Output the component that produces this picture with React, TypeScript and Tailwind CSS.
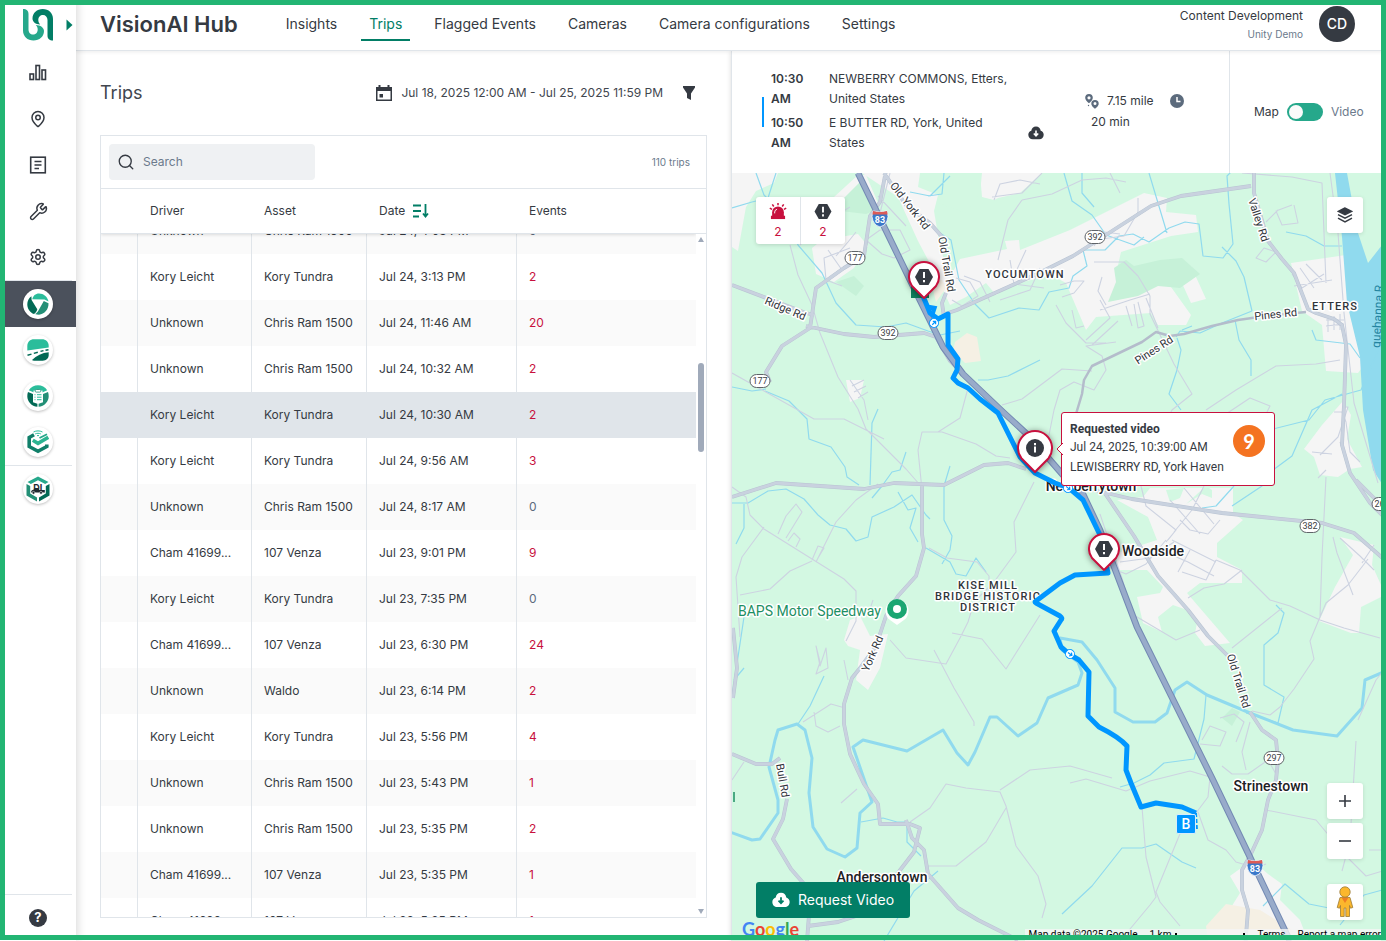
import React, { useLayoutEffect, useRef, useState } from 'react';
import { MapPin, Search, Settings, Wrench } from 'lucide-react';

interface Trip {
  driver: string;
  asset: string;
  date: string;
  events: number;
}

const TRIPS: Trip[] = [
  { driver: 'Unknown', asset: 'Chris Ram 1500', date: 'Jul 24, 4:03 PM', events: 0 },
  { driver: 'Kory Leicht', asset: 'Kory Tundra', date: 'Jul 24, 3:13 PM', events: 2 },
  { driver: 'Unknown', asset: 'Chris Ram 1500', date: 'Jul 24, 11:46 AM', events: 20 },
  { driver: 'Unknown', asset: 'Chris Ram 1500', date: 'Jul 24, 10:32 AM', events: 2 },
  { driver: 'Kory Leicht', asset: 'Kory Tundra', date: 'Jul 24, 10:30 AM', events: 2 },
  { driver: 'Kory Leicht', asset: 'Kory Tundra', date: 'Jul 24, 9:56 AM', events: 3 },
  { driver: 'Unknown', asset: 'Chris Ram 1500', date: 'Jul 24, 8:17 AM', events: 0 },
  { driver: 'Cham 41699...', asset: '107 Venza', date: 'Jul 23, 9:01 PM', events: 9 },
  { driver: 'Kory Leicht', asset: 'Kory Tundra', date: 'Jul 23, 7:35 PM', events: 0 },
  { driver: 'Cham 41699...', asset: '107 Venza', date: 'Jul 23, 6:30 PM', events: 24 },
  { driver: 'Unknown', asset: 'Waldo', date: 'Jul 23, 6:14 PM', events: 2 },
  { driver: 'Kory Leicht', asset: 'Kory Tundra', date: 'Jul 23, 5:56 PM', events: 4 },
  { driver: 'Unknown', asset: 'Chris Ram 1500', date: 'Jul 23, 5:43 PM', events: 1 },
  { driver: 'Unknown', asset: 'Chris Ram 1500', date: 'Jul 23, 5:35 PM', events: 2 },
  { driver: 'Cham 41699...', asset: '107 Venza', date: 'Jul 23, 5:35 PM', events: 1 },
  { driver: 'Cham 41699...', asset: '107 Venza', date: 'Jul 23, 5:25 PM', events: 1 },
];

const NAV = ['Insights', 'Trips', 'Flagged Events', 'Cameras', 'Camera configurations', 'Settings'];

/* ---------- icons ---------- */

function Logo() {
  return (
    <svg width="30" height="32" viewBox="0 0 30 32" fill="none">
      <path d="M0 0c3.500 0 5.500 1.500 5.500 5v15.500c0 3 2 5 4.500 5 2.700 0 4.700-2 4.700-5 0-1.700-.7-3.200-1.900-4.500C17.500 16.300 21 18.500 21 22c0 5.500-4.500 9.500-10.500 9.500C4.500 31.500 0 27.500 0 21.500z" fill="#26a88b" />
      <path d="M30 31.500c-3.500 0-5.500-1.500-5.500-5V11c0-3-2-5-4.500-5-2.700 0-4.700 2-4.700 5 0 1.700.7 3.200 1.900 4.500C12.500 15.200 9.500 13 9.500 9.500 9.500 4 14 0 19.700 0 25.700 0 30 4 30 10z" fill="#027e66" />
    </svg>
  );
}

function ChartIcon() {
  return (
    <svg width="18" height="18" viewBox="0 0 18 18" fill="none" stroke="#353a42" strokeWidth="1.600">
      <rect x="1" y="10" width="3.500" height="5.500" />
      <rect x="7" y="1.500" width="3.500" height="14" />
      <rect x="13" y="6" width="3.500" height="9.500" />
    </svg>
  );
}

function ReportIcon() {
  return (
    <svg width="18" height="18" viewBox="0 0 18 18" fill="none" stroke="#353a42" strokeWidth="1.600">
      <rect x="1.700" y="1.200" width="14.600" height="15.600" />
      <path d="M5.500 5.500h7M5.500 9h7M5.500 12.500h4.500" strokeWidth="1.400" />
    </svg>
  );
}

function Badge({ children }: { children: React.ReactNode }) {
  return (
    <span className="flex size-[30px] items-center justify-center rounded-full bg-white shadow-[0_1px_3px_rgba(0,0,0,0.25)]">
      {children}
    </span>
  );
}

function VisionIcon() {
  return (
    <svg width="22" height="22" viewBox="0 0 22 22">
      <path d="M5.300 6.200C6 2.700 8.500.4 12 .4c4.500 0 8.500 3 9.500 8.100L17.500 6.500z" fill="#2bbd9b" />
      <path d="M4.400 3.200C1.800 5 .3 8 .3 11.200c0 4.500 2.700 8.300 6.700 9.900 1.800-1.300 3-3 3.300-4.800L4.600 7z" fill="#026a55" />
      <path d="M16.800 8l4.700 2.200c.3 6-4 11-9.500 11.500-1.500 0-2.800-.2-4-.7 1.500-.8 2.600-2 3.300-3.300z" fill="#238f76" />
      <path d="M6 7h10.200L11 16z" fill="#fff" />
    </svg>
  );
}

function RoadIcon() {
  return (
    <svg width="22" height="22" viewBox="0 0 22 22">
      <path d="M.3 11.500V7C.3 3 3.200.3 7 .3h8c3.800 0 6.700 2.700 6.700 6.700v1.500L.3 11.500z" fill="#2bbd9b" />
      <path d="M.5 16.200l4-1.100M6.800 14.400l4-1.200M13.500 12.400l3-.8M18.500 11.300l3-.6" stroke="#026a55" strokeWidth="1.500" />
      <path d="M5 21c4.500-4.500 10-7 16.700-7.700V16c0 3.300-2.500 5.700-6 5.700H7c-.8 0-1.500-.3-2-.7z" fill="#026a55" />
    </svg>
  );
}

function ClipboardIcon() {
  return (
    <svg width="22" height="22" viewBox="0 0 22 22">
      <path d="M1.800 5.300C4 2 7.300.3 11 .3s7 1.700 9.200 5l-5 2.200H7z" fill="#2bbd9b" />
      <path d="M1 7l5 2v8.300l4.400 1.500v3C4.500 21.300.3 16.500.3 11.200.3 9.700.5 8.300 1 7z" fill="#026a55" />
      <path d="M21 7l-5 2v8.300l-4.400 1.500v3c5.900-.5 10.100-5.300 10.100-10.600 0-1.500-.2-2.900-.7-4.200z" fill="#238f76" />
      <rect x="6.500" y="5.500" width="9" height="11" fill="#fff" />
      <rect x="8.200" y="4.500" width="5.600" height="2.600" rx="1" fill="#fff" stroke="#238f76" strokeWidth=".8" />
      <path d="M7.500 9.700h1M10 9.700h4.500M7.500 12.200h1M10 12.200h4.500M7.500 14.700h1M10 14.700h4.500" stroke="#2bbd9b" />
    </svg>
  );
}

function CheckHexIcon() {
  return (
    <svg width="22" height="24" viewBox="0 0 22 24" fill="none">
      <path d="M6.500 2C9.300.5 12.700.5 15.500 2M8.200 3.900c1.800-.8 3.800-.8 5.600 0M10 5.700c.7-.3 1.300-.3 2 0" stroke="#2bbd9b" />
      <path d="M7 4.800L2.200 7.500v9L11 21.300l8.800-4.800v-2" stroke="#107f69" strokeWidth="3.600" />
      <path d="M5.800 10.200L11 13.300l10.300-6" stroke="#2bb491" strokeWidth="3.600" />
      <path d="M12.500 8l7.500-3.800" stroke="#26a88b" strokeWidth="1.800" />
    </svg>
  );
}

function DlIcon() {
  return (
    <svg width="24" height="26" viewBox="0 0 24 26">
      <path d="M12 .5L22.500 6l-3.300 2L12 4.300 4.800 8 1.500 6z" fill="#26a88b" />
      <path d="M.5 8l3.700 2v7.500l6.800 4v4L.5 19.500z" fill="#238f76" />
      <path d="M23.500 8l-3.700 2v7.500l-6.800 4v4l10.500-6z" fill="#026a55" />
      <text x="13" y="15" textAnchor="middle" className="fill-[#1f2a30] font-[Inter] text-[9px] font-bold">DL</text>
      <path d="M5 16.500c0-1.800 1-2.600 2.500-2.800L9 12h3l1.500 2h5l.5 2.500z" fill="#1f2a30" />
      <path d="M7.500 18.200a1.400 1.400 0 1 0 0-2.800 1.400 1.400 0 0 0 0 2.800zM15 18.200a1.400 1.400 0 1 0 0-2.800 1.400 1.400 0 0 0 0 2.800z" fill="#1f2a30" stroke="#fff" strokeWidth=".5" />
    </svg>
  );
}

function CalendarIcon() {
  return (
    <svg width="16" height="16" viewBox="0 0 16 16" fill="#353a42">
      <path d="M0 2h2.500V0h2v2h7V0h2v2H16v14H0zm1.500 4v8.500h13V6z" fillRule="evenodd" />
      <rect x="3.500" y="9" width="3.500" height="3.500" />
    </svg>
  );
}

function CloudIcon({ fill, arrow, size }: { fill: string; arrow: string; size: number }) {
  return (
    <svg width={size} height={size} viewBox="0 0 16 16">
      <path d="M8 1.500c2.700 0 4.300 1.800 4.700 4.200 1.900.6 3 2.100 3 4 0 2.700-1.900 4.600-4.400 4.600H4.700C2.200 14.300.3 12.400.3 9.700c0-1.900 1.100-3.400 3-4C3.700 3.300 5.300 1.500 8 1.500z" fill={fill} />
      <path d="M8 5.500v5M5.800 8.500L8 10.800l2.200-2.300" stroke={arrow} strokeWidth="1.600" fill="none" />
    </svg>
  );
}

function DistanceIcon() {
  return (
    <svg width="14" height="15" viewBox="0 0 14 15" fill="#5c6b7d" fillRule="evenodd">
      <path d="M4 0a3.800 3.800 0 0 1 3.800 3.800C7.800 6.500 4 9.300 4 9.300S.2 6.500.2 3.800A3.800 3.800 0 0 1 4 0zm0 2.200a1.600 1.600 0 1 0 0 3.200 1.600 1.600 0 0 0 0-3.200z" />
      <path d="M10 6a3.700 3.700 0 0 1 3.700 3.700c0 2.500-3.700 5-3.700 5s-3.700-2.500-3.700-5A3.700 3.700 0 0 1 10 6zm0 2.100a1.500 1.500 0 1 0 0 3 1.500 1.500 0 0 0 0-3z" />
      <circle cx="3.500" cy="11.500" r=".7" />
    </svg>
  );
}

function SirenIcon() {
  return (
    <svg width="18" height="18" viewBox="0 0 18 18" fill="#c8103e">
      <path d="M2.800 14V9.800a6.200 6.200 0 0 1 12.400 0V14z" />
      <rect x="1.500" y="13.500" width="15" height="3.500" />
      <path d="M9 0v2.500M3 1.500l1.500 2.200M15 1.500l-1.500 2.200M.3 5.500l2.400 1.200M17.700 5.500l-2.400 1.200" stroke="#c8103e" strokeWidth="1.600" />
      <path d="M5.500 11V9.500a3 3 0 0 1 2.500-2.800" stroke="#fff" fill="none" />
    </svg>
  );
}

function HexAlert({ x = 0, y = 0 }: { x?: number; y?: number }) {
  return (
    <g transform={`translate(${x} ${y})`}>
      <path d="M-9 0l4.500-8h9L9 0 4.500 8h-9z" fill="#353a42" />
      <path d="M0-5v6M0 3v2.200" stroke="#fff" strokeWidth="2" />
    </g>
  );
}

function LayersIcon() {
  return (
    <svg width="16" height="17" viewBox="0 0 16 17" fill="none" stroke="#353a42" strokeWidth="1.500">
      <path d="M8 1L1.500 4.300 8 7.600l6.500-3.300z" fill="#353a42" />
      <path d="M1 7.600l7 3.600 7-3.600M1 11.200l7 3.600 7-3.600" />
    </svg>
  );
}

function Pegman() {
  return (
    <svg width="18" height="32" viewBox="0 0 18 32" fill="#fbb72d" stroke="#9a7a35" strokeWidth=".8">
      <path d="M4 11.500h10l2.800 10-2.300.7-1-2.700v11h-3.700V22H8.200v8.500H4.500v-11l-1 2.700-2.300-.7z" />
      <path d="M5.500 11.500h7L9 17z" fill="#ef7d24" stroke="none" />
      <circle cx="9" cy="6" r="5.200" />
    </svg>
  );
}

/* ---------- sidebar ---------- */

function SideItem({ label, active, children }: { label: string; active?: boolean; children: React.ReactNode }) {
  return (
    <a href="#" aria-label={label} className={`flex h-[46px] items-center justify-center ${active ? 'bg-[#4b515c]' : ''}`}>
      {children}
    </a>
  );
}

function Sidebar() {
  return (
    <aside className="z-10 flex w-[76px] shrink-0 flex-col bg-white text-[#353a42] shadow-[2px_0_8px_rgba(0,0,0,0.14)]">
      <div className="flex h-[50px] items-center justify-end gap-3 pr-[3px]">
        <Logo />
        <svg width="8" height="12" viewBox="0 0 8 12"><path d="M1.500.5L7.500 6l-6 5.500z" fill="#027e66" /></svg>
      </div>
      <SideItem label="Analytics"><ChartIcon /></SideItem>
      <SideItem label="Locations"><MapPin size={18} strokeWidth={2} /></SideItem>
      <SideItem label="Reports"><ReportIcon /></SideItem>
      <SideItem label="Maintenance"><Wrench size={19} strokeWidth={1.9} /></SideItem>
      <SideItem label="Settings"><Settings size={18} strokeWidth={2} /></SideItem>
      <div className="mr-1 border-t border-[#e0e5ea]" />
      <SideItem label="Vision" active><Badge><VisionIcon /></Badge></SideItem>
      <SideItem label="Roads"><Badge><RoadIcon /></Badge></SideItem>
      <SideItem label="Forms"><Badge><ClipboardIcon /></Badge></SideItem>
      <SideItem label="Compliance"><Badge><CheckHexIcon /></Badge></SideItem>
      <div className="mr-1 border-t border-[#e0e5ea]" />
      <SideItem label="DL"><Badge><DlIcon /></Badge></SideItem>
      <div className="mt-auto mr-1 border-t border-[#e0e5ea]" />
      <SideItem label="Help">
        <span className="flex size-[18px] items-center justify-center rounded-full bg-[#353a42] text-[13px] font-bold text-white">?</span>
      </SideItem>
    </aside>
  );
}

/* ---------- header ---------- */

function Header() {
  return (
    <header className="z-[5] flex h-[51px] shrink-0 items-start border-b border-[#e0e5ea] bg-white pr-[31px] pl-6 shadow-[0_1px_4px_rgba(0,0,0,0.08)]">
      <h1 className="mt-2 text-[22px] leading-8 font-semibold">VisionAI Hub</h1>
      <nav className="ml-8 flex">
        {NAV.map((item) => (
          <a
            key={item}
            href="#"
            className={`mx-2 mt-2 flex h-[33px] items-center border-b-2 px-2 text-sm ${
              item === 'Trips' ? 'border-[#027e66] text-[#027e66]' : 'border-transparent'
            }`}
          >
            {item}
          </a>
        ))}
      </nav>
      <div className="mt-1.5 ml-auto flex items-center gap-4">
        <div className="text-right">
          <div className="text-xs leading-5">Content Development</div>
          <div className="text-[10px] leading-4 text-[#6b7a8c]">Unity Demo</div>
        </div>
        <span className="flex size-9 items-center justify-center rounded-full bg-[#353a42] text-sm font-medium text-white">CD</span>
      </div>
    </header>
  );
}

/* ---------- trip list ---------- */

function TripTable() {
  const scroller = useRef<HTMLDivElement>(null);
  const [selected, setSelected] = useState(4);

  useLayoutEffect(() => {
    if (scroller.current) scroller.current.scrollTop = 26;
  }, []);

  const th = 'h-[45px] border-b border-[#e0e5ea] bg-white pl-3 text-left font-normal';
  const td = 'h-[46px] pl-3';

  return (
    <div className="flex min-h-0 flex-1">
      <div ref={scroller} className="min-w-0 flex-1 overflow-y-auto [scrollbar-width:none]">
        <table className="w-full table-fixed border-separate border-spacing-0 text-xs leading-5">
          <thead className="sticky top-0 shadow-[0_1px_3px_rgba(0,0,0,0.12)]">
            <tr>
              <th className={`${th} w-[37px]`} aria-label="Select" />
              <th className={`${th} w-[114px]`}>Driver</th>
              <th className={`${th} w-[115px]`}>Asset</th>
              <th className={`${th} w-[150px]`}>
                <button className="flex items-center gap-2">
                  Date
                  <svg width="16" height="14" viewBox="0 0 16 14" fill="none" stroke="#027e66" strokeWidth="1.800">
                    <path d="M0 1.500h8M0 7h8M0 12.500h6M12.500 0v12M10 9.500l2.500 3 2.500-3" />
                  </svg>
                </button>
              </th>
              <th className={th}>Events</th>
            </tr>
          </thead>
          <tbody>
            {TRIPS.map((trip, i) => {
              const on = i === selected;
              const cell = `${td} ${on ? '' : 'border-r border-[#e0e5ea]'}`;
              return (
                <tr key={i} onClick={() => setSelected(i)} className={on ? 'bg-[#e0e5ea]' : i % 2 === 0 ? 'bg-[#fafafa]' : 'bg-white'}>
                  <td className={cell} />
                  <td className={`${cell} truncate`}>{trip.driver}</td>
                  <td className={cell}>{trip.asset}</td>
                  <td className={cell}>{trip.date}</td>
                  <td className={`${td} ${trip.events > 0 ? 'text-[#c8103e]' : 'text-[#5c6b7d]'}`}>{trip.events}</td>
                </tr>
              );
            })}
          </tbody>
        </table>
      </div>
      <div className="flex w-2.5 flex-col items-center" aria-hidden="true">
        <div className="h-[45px] w-full shrink-0 border-b border-[#e0e5ea]" />
        <svg width="6" height="5" viewBox="0 0 6 5" className="mt-[3px]"><path d="M3 0l3 5H0z" fill="#a0aaba" /></svg>
        <div className="grow-[121]" />
        <div className="h-[89px] w-1.5 shrink-0 rounded-full bg-[#a0aaba]" />
        <div className="grow-[456]" />
        <svg width="6" height="5" viewBox="0 0 6 5" className="mb-[3px]"><path d="M3 5L0 0h6z" fill="#a0aaba" /></svg>
      </div>
    </div>
  );
}

function TripsPanel() {
  return (
    <section className="flex min-h-0 min-w-0 flex-col px-6 pb-[23px]">
      <div className="flex h-[84px] shrink-0 items-center">
        <h2 className="text-lg text-[#41464e]">Trips</h2>
        <button className="ml-auto flex items-center gap-[9px] text-xs text-[#41464e]">
          <CalendarIcon />
          Jul 18, 2025 12:00 AM - Jul 25, 2025 11:59 PM
        </button>
        <button className="mr-3 ml-5" aria-label="Filter">
          <svg width="12" height="14" viewBox="0 0 12 14"><path d="M0 0h12v1.500L8 7.500V14l-4-2V7.500L0 1.500z" fill="#353a42" /></svg>
        </button>
      </div>
      <div className="flex min-h-0 flex-1 flex-col border border-[#e0e5ea]">
        <div className="flex h-[53px] shrink-0 items-center border-b border-[#e0e5ea] pr-4 pl-2">
          <label className="flex h-9 w-[206px] items-center gap-2 rounded bg-[#eff1f3] pl-2">
            <Search size={18} strokeWidth={1.8} />
            <input type="text" aria-label="Search trips" placeholder="Search" className="w-40 bg-transparent text-xs outline-none placeholder:text-[#6b7a8c]" />
          </label>
          <span className="ml-auto text-[10px] text-[#6b7a8c]">110 trips</span>
        </div>
        <TripTable />
      </div>
    </section>
  );
}

/* ---------- trip details ---------- */

function TripDetails() {
  return (
    <div className="flex h-[122px] shrink-0 bg-white text-xs leading-5">
      <div className="flex flex-1 pt-[18px] pl-[30px]">
        <div className="mt-7 h-[30px] w-0.5 bg-[#0096ff]" />
        <div className="ml-[7px] flex w-[240px] flex-col gap-1">
          <div className="flex">
            <span className="w-[58px] shrink-0 pr-4 font-semibold">10:30 AM</span>
            <span>NEWBERRY COMMONS, Etters, United States</span>
          </div>
          <div className="flex">
            <span className="w-[58px] shrink-0 pr-4 font-semibold">10:50 AM</span>
            <span className="pr-4">E BUTTER RD, York, United States</span>
          </div>
        </div>
        <button className="mt-14 ml-[17px] self-start" aria-label="Download">
          <CloudIcon fill="#353a42" arrow="#fff" size={16} />
        </button>
        <div className="mt-[22px] ml-[41px]">
          <div className="flex items-center">
            <DistanceIcon />
            <span className="ml-2">7.15 mile</span>
            <svg width="14" height="14" viewBox="0 0 14 14" className="ml-4">
              <circle cx="7" cy="7" r="7" fill="#5c6b7d" />
              <path d="M7 3v4.500h3.500" stroke="#fff" strokeWidth="1.500" fill="none" />
            </svg>
          </div>
          <div className="mt-px ml-[6px]">20 min</div>
        </div>
      </div>
      <div className="flex w-[157px] items-center gap-2 border-l border-[#e0e5ea] pl-6">
        <span>Map</span>
        <button role="switch" aria-checked="false" aria-label="Show video" className="flex h-[18px] w-9 items-center rounded-full bg-[#26a88b] px-0.5">
          <span className="size-3.5 rounded-full bg-[#fafafa]" />
        </button>
        <span className="text-[#6b7a8c]">Video</span>
      </div>
    </div>
  );
}

/* ---------- map ---------- */

const URBAN = [
  'M732 173h46l-4 10-18 8-10 16-8 44-6-4z',
  'M834 197l24-22h8l12 28-14 10z',
  'M862 173h58l-2 14 20 8-4 16 6 36 10 30 10-18 47-10-2-8 14-1 1 10 50-20 74-37 23 5-1 14 30 3 2 17-27 4-50 16-5 22 45-10 30 2 15 33-15 4-15-33-15 3 30 42-5 10-28 0-7-12-55 4-10 13-20-47-15-8-40 10-15 10-10-12-20 14-16 8-14-30-18-34-20-44z',
  'M822 240l36-6 10 12-14 22-20 14-18-8-4-26z',
  'M980 173h62l-22 20-22 5-4 2-12-3z',
  'M1291 263l55-8 4 60 14 50-6 8-32-2-4-46-20-14z',
  'M1343 401l8 14-4 24 15 28-12 2-12 8-18-2-6-18-10-8 18-24z',
  'M1117 500L1143 497 1150 488 1233 488 1233 513 1243 520 1217 543 1217 557 1242 570 1242 583 1200 583 1187 593 1230 643 1205 646 1195 633 1197 623 1187 610 1173 605 1158 617 1162 632 1143 623 1137 597 1160 593 1163 587 1147 570 1117 570 1117 553 1157 540 1148 517z',
  'M1340 537l34 8-2 20 9 20v12l-20 10-2 26-8 0-32-12 16-34 18-32z',
  'M844 640l6-20 10-4 10 20 18-2-8 34-12 22-12-10 4-30-12-4z',
  'M1230 876l22-16 16 14 14 10-2 16 20 20 8 21h-72l4-24-10-8 10-16z',
  'M846 380l18 0-4 18-10 4z',
];

const PARKS = [
  'M1114 268l12-8 8 6 26-6 22-2 18 16-20 14-22-2-20 10-30 6 8-20z',
  'M832 210l30-30 14 30-10 4z',
  'M1222 718l10-10 8 4-8 14z',
  'M836 282l18-6 10 10-8 10z',
];

// open ground inside the built-up areas
const CLEARINGS = ['M1166 490l18-2-4 10-10 4z', 'M1186 504l16-10 10 4 0-8-6-4z', 'M938 173h44l-2 20-14 20-28-10z'];

const SAND = ['M955 342l12-9 10 4 4 24-16 2-12-12z', 'M930 278l12 2 4 8-10 14z', 'M1206 926l20-22 34 6 40 25 4 6h-96z'];

const SUSQUEHANNA = 'M1335 173l7 64 5 66 13 54 3 53 10 60 13 20V240l-18 23-10-30-11-60z';

const STREAMS = [
  'M732 208l20-6 16-4 8-25M756 173l8 22 20 20 14 30 24 28 14 30 20 22 30 2 20-4 22 8 12 4 20-4',
  'M910 192l20 4 20-20M928 196l14-2 2-21M935 230l16 10 8 40 16 24 14 14 30-10 20 2 10-18 20-4 4-12 14-10-4-16 22 0 14-14 14-2 16 8 20-14 16-6 14 2 4 32 20 2 10-14-4-40-2-28 4-4',
  'M1064 173l8 28 20 14 14 20 28 10 10-8M1149 173l18 60M1082 173v20l12 14M1222 247l14 14 8 16 8 34',
  'M732 387l20 4 14-2M1252 311l-30 12-22 10-20-2-4 6M1286 232l20 4 18 10 18 0M1312 330l4 10 34 4 10 14',
  'M1177 338l4 12-4 20-8 24 12 16M1235 320l4 20 12 20 0 16M1182 330l10-4',
  'M765 391l24 10 18 18 2 20 22 8 14 20 2 10 12 8M878 409l-6 14-2 62M906 452l-6 18-8 2-10 14-10 12',
  'M732 503l16 0 20-12 18-2 18 10 14 16 12 10 16 4 10 12 12-4 4-20 22-10 18-12 14 20 4 4M744 504v24l-8 16',
  'M950 466l-6 20 0 34 8 16-2 14-8 14M926 548l24 14 6 12 10 2 10-18 10 14',
  'M898 492l10 18 8-2-6 20 8 14M1234 486l-18 20-14 2M1276 605l8 8-6 20-14 12v40l20 12-6 26-32-10',
  'M1206 695l-2 24-10 40-30 4-14 12-16 8-14 4M732 697l12-80M744 668l-10 12',
  'M824 676l-14 30-12 18M1062 914l30-28 30-38 20 0 14-4 26 18 14 6M1263 906l22-22 24 20 20 4',
  'M861 822l22-4 14 4 10 0v20l14 14M884 941l30-50 24-20M1340 925l24-30 22-6',
  'M978 380l10 0 20-4 20-10 12-6M1381 344l-20 46-36 10-16 20-40 10M1232 506l30-20 0-8 30-22 20-46 30-16',
];

const RIVER =
  'M730 832l22 8 8-1 18-26v-13l-9-33 6-27 3-10 19-6 8 6 7 28-3 35 4 34 14 22 18 8 12-9 3-35 12-11-19-55 10-7 44 11 36-21 14 23 11 12 7-13 15-35 7 0 21 19 19-13 11-25 30-13 4-12-4-11-16-12-2-12 22 4 15 18 18 28v24l18 10h22l12-9 8-23 12-8 20 13 43 18 43 17 44 6 25-28 3-28 21-9';

const MINOR_ROADS = [
  'M790 245l8 30 14 30 8 28 18 44 20 32 8 20 40 40 14 16M732 373l82 46 30 0 40 20',
  'M732 487l14 10 4 18 14 14 80 50 12 12v30l-10 20M844 660l4 20M816 562l20-40 20-22 22-16',
  'M764 527l-22 30-6 20 4 60M740 595l30-6 20-18 22-10M778 534l8-18 10-12 6 8-16 26M788 541l6-8 6 6-4 8M812 560l6-14 6 2-6 10',
  'M922 490l-4-40 4-18 20 0 34 12 20 12 14 2M968 388l-8 30-22 14M1002 405l20-6 40-30 30 2',
  'M1034 482l-20 40 2 30-22 30-20 20-6 20-8 16-14 26-40-6-16-18M952 633l30 6 24 30 10-16 24-38',
  'M929 548l18 10 30 4 12 14 0 20M934 650l20 38 20 34 0 4M873 600l-4 12-12 0M880 615l-10-2',
  'M910 822l20-14 16-24 20 4 34 4 6 14 10 40 22 30 8 28-4 14M1000 790l30-20 40-4 42 12M1006 808l-20 34-30 24-30 0',
  'M841 803l16-14M803 722l28-18 14 4M814 712l2 14 12 6 12-6M732 780l12-18M1196 813l12-16 2-20-20-6-40 10-24 10-40-12-16 4',
  'M1142 807l4 50 10 40-6 8-30 36M1184 824l-28 68 4 10 20 24M1198 812l10 28 18 10 10 12 20 6 10-4',
  'M1266 810l50 10 30 36 20 20 20-6M1356 741l-6 100-8 30M1381 850h-12M1222 766l10 8 16 0 20-14 8 14',
  'M1202 740l8-14 16 6-6 14-20-2M1220 718l14-4 10 8-8 20M1250 722l-8 30 4 18M1358 720l18-40 8-10',
  'M1060 470l-14-20 8-40 6-20 14-8 20 8 12-20-4-14-16-10 30-4M1100 514l8 24 14 40 10 36 44 26 24-10',
  'M1216 560l24 10 30 30 20 6 30 14 24 8 36 10M1232 648l50-40M1320 617l-10 24 4 18-20 30-14 18-10 8-18-4',
  'M1320 617l6-14 22-18 20-26M1333 537l4 16 16 42M1340 538l20 18 14 14M1374 545l-12 18',
  'M1188 598l16-10 20-4 18-14M1140 482l6 24 30 24-8 10M1204 486l-12 24-18 22M1170 500l30 34M1184 488l30 36M1180 520l10 10 18 4 12-14M1166 542l10-12M1160 550l28 12 26 14M1172 540l44 22M1182 572l24 8 10-20M1190 550l-12 22',
  'M1106 566l20 8 20-10 20-24M1120 562l30-4 24-16M1320 617l2-60 4-80M1206 410l30-20 40-24 40-2 24-4',
  'M1240 486l20-60 10-20-20-8-30 20M1292 205l-16 6 6 14 16-2-4-18M1266 222l12-12M1256 258l8-10 12 4-10 10zM1330 173l8 60 6 80 10 90 24 80M1242 173l50 4 30 6 4 100',
  'M1022 200l-14 20-10 40M1022 200l30-6 30-14 24-2 20 4M1042 173l-20 20-30 4M1110 173l10 20M800 245l20-20 30-18M836 256l12-14 8-10',
  'M1094 240l30-4 14-24 0-14M1094 246l10-14 16 2M1094 262l30 0 14 14 12 20 0 18 24 50 18 30-20 16-20 40M1106 305l-8-14 4-14M1060 285l14-4 10 0-10 12-12 4M1056 305l10 18 20 20 20 0M1100 310l30-10 20-6M1126 306l6 20M1134 304l4 24 6-2-6-24M1146 298l12 30M1086 340l24-22-10-18M1092 345l26-24M1072 310l4 18 8-2',
  'M1292 274l10 14 22-14M1300 268l14 20M1294 286l38-6M1306 264l16 16M1328 318v14M1334 316v14M1340 314v16M1326 320l18 0M1326 326l18-2',
  'M1320 455l18-18 10-30-6 0M1340 442l8 24M1326 470l-8 8M1312 452l20 2M1334 412l8 0 4 10 4 30 10 10',
  'M866 240l14-10 20 0 10 20-16 8-12-4zM850 248l-26 10 2 22 16 6M828 250l14 20M994 200l6-16 20-4 20 4M878 196l28 30M890 173l-10 40M952 300l10 6 16-10-8-14-14-4M964 276l16 6 10 20M1010 260l4 24 30 4M1026 250l-14 30M1000 300l30-10 10-22',
  'M850 380l14 20 4 20M852 386l12-6M854 392l12-6M858 398l10-6M820 662l-4-16 4 20 6-18 2 20-12 6z',
];

const ROADS = [
  'M732 285l74 28 8 2M770 382l-4-10 16-26 28-18 6-40 28-20 20-12 6-40 10-14 8-42',
  'M806 326l38 8 30 3 50-4 12 4 14 24 14 14',
  'M945 314l12-4 80-36 36-18 78-50 30-10 70-10',
  'M884 173l22 32 24 18 14 16M946 293l-4 10 2 14',
  'M1254 173v20l14 48 14 18 12 14 14 36 8 4 18 6 8 6 4 20-2 60-2 40 8 28 20 30 14 14',
  'M732 497l44-14 88 6 30-6 50 2 40-20 24-2 18 6',
  'M922 484v50l2 14-8 28-18 20-12 20-10 30-16 22-8 10-8 26v20l6 30 14 30 14 20 2 20 30 0 10 4-6 24-20 26-6 22',
  'M906 820l6 18 12 12 4 24 30 34 20 12 40 20M787 799l-4 20-10 20 18 30 14 16 4 30-2 26M732 754l24 10 16 0 8-6M808 926l30-4 30-10',
  'M1072 485l60 14 90 14 100 10 32 10 32 28M1356 480l26 26',
  'M1104 492l30 44 24 40 30 34 20 26 20 20 4 14M1250 712l12 18 14 10 2 20-2 20-8 20-6 30-12 26-8 14v20l6 20-4 51',
  'M733 628l4 40-4 30',
];

const PINES_RD = 'M1306 312l-40 4-28 4-26 6-28 8-14 2-14-4-14 10-50 24-8 14-2 14-6 20';

const INTERSTATE = 'M858 173L910 280 943 347 963 374 1003 412 1030 437 1063 475 1082 492 1100 530 1137 627 1213 780 1248 853 1290 941';

const ROUTE =
  'M923 296l7 17 8 6 10-5v31l10 14-1 11-4 8 5 5 10 5 12 11 18 14 22 44 15 16 20 10 14 5 14 12 17 35 8 38-33 2-15 8-24 18q-2 1 0 2l24 13q3 2 1 4l-7 11 7 16 8 7 10 6 10 12-1 44 11 11q20 10 28 19l-1 24 5 13 10 24 15-4 26 4 14 6';

interface Label {
  text: string;
  x: number;
  y: number;
  rotate?: number;
}

const ROAD_LABELS: Label[] = [
  { text: 'Old York Rd', x: 907, y: 208, rotate: 52 },
  { text: 'Old Trail Rd', x: 943, y: 265, rotate: 80 },
  { text: 'Ridge Rd', x: 784, y: 312, rotate: 23 },
  { text: 'Valley Rd', x: 1255, y: 221, rotate: 72 },
  { text: 'Pines Rd', x: 1156, y: 353, rotate: -33 },
  { text: 'Pines Rd', x: 1276, y: 318, rotate: -6 },
  { text: 'York Rd', x: 876, y: 655, rotate: -66 },
  { text: 'Old Trail Rd', x: 1235, y: 682, rotate: 73 },
  { text: 'Bull Rd', x: 779, y: 781, rotate: 80 },
];

const DISTRICTS: Label[] = [
  { text: 'YOCUMTOWN', x: 1025, y: 278 },
  { text: 'ETTERS', x: 1335, y: 310 },
  { text: 'KISE MILL', x: 988, y: 589 },
  { text: 'BRIDGE HISTORIC', x: 988, y: 600 },
  { text: 'DISTRICT', x: 988, y: 611 },
];

const TOWNS: Label[] = [
  { text: 'Newberrytown', x: 1091, y: 491 },
  { text: 'Woodside', x: 1153, y: 556 },
  { text: 'Strinestown', x: 1271, y: 791 },
  { text: 'Andersontown', x: 882, y: 882 },
];

const SHIELDS: Label[] = [
  { text: '177', x: 855, y: 258 },
  { text: '392', x: 888, y: 333 },
  { text: '177', x: 760, y: 381 },
  { text: '392', x: 1095, y: 237 },
  { text: '382', x: 1310, y: 526 },
  { text: '297', x: 1274, y: 758 },
  { text: '262', x: 1382, y: 504 },
];

function Interstate({ x, y }: { x: number; y: number }) {
  return (
    <g transform={`translate(${x} ${y})`}>
      <path d="M-7-8Q0-6 7-8 9-2 7 2 5 7 0 8-5 7-7 2-9-2-7-8z" fill="#3a78c9" stroke="#fff" strokeWidth=".8" />
      <path d="M-7-8Q0-6 7-8l.6 3.500h-15.200z" fill="#dd5b56" />
      <text y="4" textAnchor="middle" className="fill-white text-[9px] font-bold">83</text>
    </g>
  );
}

function Pin({ x, y, r, tip, children }: { x: number; y: number; r: number; tip: number; children: React.ReactNode }) {
  const w = r * 0.8;
  const h = r * 0.6;
  return (
    <g transform={`translate(${x} ${y})`} className="drop-shadow-[0_1px_3px_rgba(0,0,0,0.45)]">
      <path d={`M0 ${tip}L${-w} ${h}A${r} ${r} 0 1 1 ${w} ${h}z`} fill="#fff" stroke="#c8103e" strokeWidth="2" strokeLinejoin="round" />
      {children}
    </g>
  );
}

function RouteArrow({ x, y, rotate }: { x: number; y: number; rotate: number }) {
  return (
    <g transform={`translate(${x} ${y}) rotate(${rotate})`} fill="none" stroke="#0096ff">
      <circle r="4.500" fill="#fff" />
      <path d="M-2.500 0h5M.3-2l2 2-2 2" strokeWidth="1.200" />
    </g>
  );
}

function MapCanvas() {
  const halo = 'stroke-white stroke-[3px] [paint-order:stroke] [stroke-linejoin:round]';
  return (
    <svg
      className="block size-full font-[Roboto,sans-serif]"
      viewBox="732 173 654 768"
      preserveAspectRatio="xMinYMin slice"
      role="img"
      aria-label="Trip route map"
    >
      <rect x="732" y="173" width="654" height="768" fill="#d3f8e2" />
      {URBAN.map((d) => <path key={d} d={d} fill="#f5f5f5" />)}
      {CLEARINGS.map((d) => <path key={d} d={d} fill="#d3f8e2" />)}
      {PARKS.map((d) => <path key={d} d={d} fill="#c6f1d8" />)}
      {SAND.map((d) => <path key={d} d={d} fill="#f5f0e4" />)}
      <path d={SUSQUEHANNA} fill="#90daee" />
      <g fill="none" strokeLinejoin="round">
        <path d={STREAMS.join('')} stroke="#90daee" strokeWidth="1.200" />
        <path d={RIVER} stroke="#90daee" strokeWidth="3" />
        <path d={MINOR_ROADS.join('')} stroke="#cdd3e1" strokeWidth="1.100" />
        <path d={PINES_RD} stroke="#b4bccb" strokeWidth="2.500" />
        <path d={ROADS.join('')} stroke="#b9c3d2" strokeWidth="3.800" />
        <path d={ROADS.join('')} stroke="#c9d2df" strokeWidth="2.800" />
        <path d={INTERSTATE} stroke="#7389b3" strokeWidth="6.500" />
        <path d={INTERSTATE} stroke="#98abca" strokeWidth="4.500" />
      </g>

      {SHIELDS.map((s, i) => (
        <g key={i}>
          <rect x={s.x - 10} y={s.y - 6.5} width="20" height="13" rx="6.500" fill="#fff" stroke="#5f6368" />
          <text x={s.x} y={s.y + 3} textAnchor="middle" className="fill-[#3c4043] text-[9px]">{s.text}</text>
        </g>
      ))}
      <Interstate x={880} y={219} />
      <Interstate x={1255} y={868} />

      {ROAD_LABELS.map((l, i) => (
        <text key={i} transform={`translate(${l.x} ${l.y}) rotate(${l.rotate})`} textAnchor="middle" className={`fill-[#30343a] text-[11px] ${halo}`}>
          {l.text}
        </text>
      ))}
      {DISTRICTS.map((l) => (
        <text key={l.text} x={l.x} y={l.y} textAnchor="middle" className={`fill-[#30343a] text-[11px] font-medium tracking-widest ${halo}`}>
          {l.text}
        </text>
      ))}
      {TOWNS.map((l) => (
        <text key={l.text} x={l.x} y={l.y} textAnchor="middle" className={`fill-[#202124] text-[14px] font-medium ${halo}`}>
          {l.text}
        </text>
      ))}
      <text x="738" y="616" className={`fill-[#1c8f63] text-[14px] ${halo}`}>BAPS Motor Speedway</text>
      <text transform="translate(1380 348) rotate(-87)" className="fill-[#2484a0] text-[12px]">quehanna R.</text>
      <path d="M897 625l-7-5a11.500 11.500 0 1 1 14 0z" fill="#fff" />
      <circle cx="897" cy="609" r="10" fill="#1ba672" />
      <circle cx="897" cy="609" r="4" fill="#fff" />
      <path d="M734 792v10" stroke="#1c8f63" strokeWidth="1.500" />

      <path d="M1196 813l1 18" stroke="#0096ff" strokeWidth="2" strokeDasharray="4 2" />
      <path d={ROUTE} fill="none" stroke="#0096ff" strokeWidth="5" strokeLinejoin="round" />
      <path d="M930 306l6 1-2 6z" fill="#0096ff" stroke="#0096ff" strokeWidth="2" />
      <RouteArrow x={934} y={323} rotate={-45} />
      <RouteArrow x={1068} y={488} rotate={40} />
      <RouteArrow x={1070} y={654} rotate={35} />
      <rect x="911" y="283" width="18" height="15" fill="#107f5d" />
      <rect x="1176.500" y="814.500" width="19" height="19" rx="1.500" fill="#0096ff" stroke="#d8ecfa" />
      <text x="1186" y="829" textAnchor="middle" className="fill-white text-[14px] font-medium">B</text>

      <Pin x={924} y={277} r={15} tip={21}><HexAlert /></Pin>
      <Pin x={1035} y={448} r={17} tip={24}>
        <circle r="9" fill="#353a42" />
        <path d="M0-5v2.200M0-1.500v6" stroke="#fff" strokeWidth="2" />
      </Pin>
      <Pin x={1104} y={549} r={15} tip={21}><HexAlert /></Pin>
    </svg>
  );
}

function MapButton({ label, children }: { label: string; children: React.ReactNode }) {
  return (
    <button aria-label={label} className="flex size-9 items-center justify-center rounded-[3px] bg-white shadow-[0_1px_4px_rgba(0,0,0,0.12)]">
      {children}
    </button>
  );
}

function MapPanel() {
  return (
    <div className="relative min-h-0 flex-1 overflow-hidden">
      <MapCanvas />

      <div className="absolute top-6 left-6 flex divide-x divide-[#e0e5ea] rounded-[3px] bg-white text-xs text-[#c8103e] shadow-[0_1px_4px_rgba(0,0,0,0.15)]">
        <button className="flex h-[47px] w-[45px] flex-col items-center pt-1.5" aria-label="Critical events">
          <SirenIcon />
          <span className="leading-6">2</span>
        </button>
        <button className="flex h-[47px] w-11 flex-col items-center pt-1.5" aria-label="Alerts">
          <svg width="18" height="18" viewBox="-9 -9 18 18"><HexAlert /></svg>
          <span className="leading-6">2</span>
        </button>
      </div>

      <div className="absolute top-6 right-[23px]">
        <MapButton label="Layers"><LayersIcon /></MapButton>
      </div>

      <div className="absolute top-[239px] left-[329px] flex w-[214px] items-start justify-between rounded-[3px] border border-[#c8103e] bg-white py-[7px] pr-[9px] pl-2 font-[Roboto,sans-serif] text-xs text-[#353a42]">
        <svg width="7" height="12" viewBox="0 0 7 12" className="absolute top-[30px] -left-1.5">
          <path d="M7 0L1 6l6 6" fill="#fff" stroke="#c8103e" />
        </svg>
        <div>
          <div className="leading-[18px] font-bold">Requested video</div>
          <div className="leading-[18px]">Jul 24, 2025, 10:39:00 AM</div>
          <div className="leading-[22px]">LEWISBERRY RD, York Haven</div>
        </div>
        <span className="mt-[5px] flex size-8 items-center justify-center rounded-full bg-[#f47321] font-[Lato,sans-serif] text-xl font-bold text-white">9</span>
      </div>

      <div className="absolute right-[23px] bottom-[21px] flex flex-col gap-1 text-[#353a42]">
        <MapButton label="Zoom in">
          <svg width="12" height="12" viewBox="0 0 12 12" stroke="#353a42" strokeWidth="1.600"><path d="M6 0v12M0 6h12" /></svg>
        </MapButton>
        <MapButton label="Zoom out">
          <svg width="12" height="12" viewBox="0 0 12 12" stroke="#353a42" strokeWidth="1.600"><path d="M0 6h12" /></svg>
        </MapButton>
        <div className="mt-[21px]">
          <MapButton label="Street view"><Pegman /></MapButton>
        </div>
      </div>

      <div className="absolute bottom-0 left-2.5 font-[Lato,sans-serif] text-lg leading-6 font-bold" aria-label="Google">
        <span className="text-[#4285f4]">G</span>
        <span className="text-[#ea4335]">o</span>
        <span className="text-[#fbbc04]">o</span>
        <span className="text-[#4285f4]">g</span>
        <span className="text-[#34a853]">l</span>
        <span className="text-[#ea4335]">e</span>
      </div>

      <button className="absolute bottom-[23px] left-6 flex h-9 items-center gap-2 rounded-[3px] bg-[#027e66] px-4 text-sm text-white">
        <CloudIcon fill="#fff" arrow="#027e66" size={18} />
        Request Video
      </button>

      <div className="absolute right-[5px] bottom-0 flex h-3 items-center gap-3 bg-[#f5f5f5]/80 pl-1 font-[Roboto,sans-serif] text-[10px] leading-3 text-black">
        <span>Map data ©2025 Google</span>
        <span className="flex items-center gap-1">
          1 km
          <span className="h-1 w-[70px] border-x-2 border-b border-black" />
        </span>
        <a href="#">Terms</a>
        <a href="#">Report a map error</a>
      </div>
    </div>
  );
}

export default function App() {
  return (
    <div className="relative flex h-screen overflow-hidden bg-white font-[Inter,sans-serif] text-[#353a42]">
      <Sidebar />
      <div className="flex min-w-0 flex-1 flex-col">
        <Header />
        <main className="grid min-h-0 flex-1 grid-cols-2">
          <TripsPanel />
          <section className="flex min-h-0 min-w-0 flex-col border-l border-[#e0e5ea] shadow-[0_0_5px_rgba(0,0,0,0.15)]">
            <TripDetails />
            <MapPanel />
          </section>
        </main>
      </div>
      <div className="pointer-events-none absolute inset-x-0 top-0 bottom-px z-20 border-[5px] border-[#22b573]" />
    </div>
  );
}
